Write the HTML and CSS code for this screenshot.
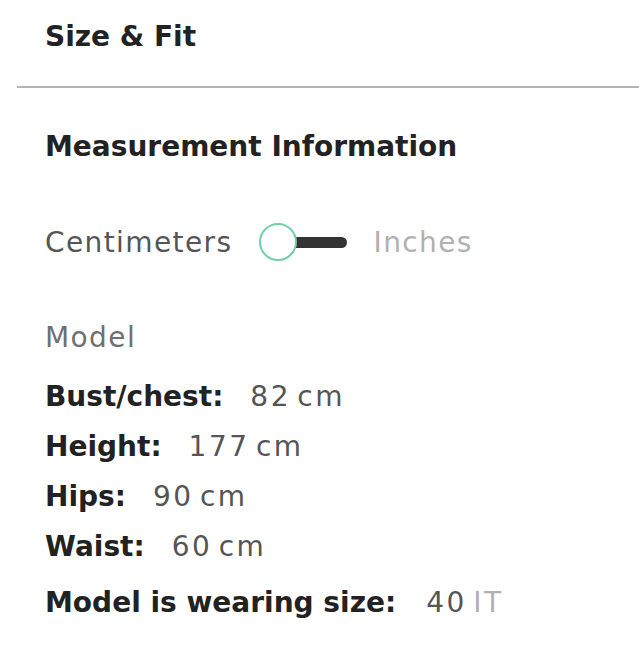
FILE: index.html
```html
<!DOCTYPE html>
<html lang="en">
<head>
    <meta charset="UTF-8" />
    <title>Size &amp; Fit</title>
    <link rel="stylesheet" href="styles.css">
</head>
<body>
    <div class="panel">
        <h1 class="panel-title">Size &amp; Fit</h1>
        <hr class="divider" />

        <section class="measurements">
            <h2 class="section-title">Measurement Information</h2>

            <div class="unit-toggle">
                <span class="unit active">Centimeters</span>
                <span class="switch"><span class="knob"></span></span>
                <span class="unit">Inches</span>
            </div>

            <div class="model-label">Model</div>
            <ul class="model-list">
                <li><span class="label">Bust/chest:</span><span class="value">82 cm</span></li>
                <li><span class="label">Height:</span><span class="value">177 cm</span></li>
                <li><span class="label">Hips:</span><span class="value">90 cm</span></li>
                <li><span class="label">Waist:</span><span class="value">60 cm</span></li>
                <li class="wearing"><span class="label">Model is wearing size:</span><span class="value">40 <span class="size-system">IT</span></span></li>
            </ul>
        </section>
    </div>
</body>
</html>
```
FILE: styles.css
```css
body {
    margin: 0;
    background: #fff;
    font-family: 'DejaVu Sans', sans-serif;
    color: #222;
}
.panel {
    padding-top: 12px;
}
.panel-title {
    margin: 0;
    padding-left: 45px;
    font-size: 28px;
    font-weight: 700;
    line-height: 50px;
    color: #222;
}
.divider {
    margin: 24px 0 0 17px;
    border: none;
    height: 2px;
    background: #b4b4b4;
}
.measurements {
    padding-left: 45px;
}
.section-title {
    margin: 34px 0 0;
    font-size: 28px;
    font-weight: 700;
    line-height: 50px;
    color: #222;
}
.unit-toggle {
    display: flex;
    align-items: center;
    height: 50px;
    margin-top: 45px;
}
.unit {
    font-size: 28px;
    letter-spacing: 1.4px;
    color: #b0b0b0;
}
.unit.active {
    color: #555;
}
.switch {
    position: relative;
    display: inline-block;
    width: 88px;
    height: 38px;
    margin: 0 27px 0 26px;
}
.switch::before {
    content: '';
    position: absolute;
    left: 28px;
    right: 0;
    top: 14px;
    height: 11px;
    border-radius: 6px;
    background: #333;
}
.knob {
    position: absolute;
    left: 0;
    top: 0;
    width: 34px;
    height: 34px;
    border: 2px solid #6fd1a6;
    border-radius: 50%;
    background: #fff;
}
.model-label {
    margin-top: 46px;
    font-size: 28px;
    line-height: 50px;
    letter-spacing: 1.4px;
    color: #707070;
}
.model-list {
    list-style: none;
    margin: 9px 0 0;
    padding: 0;
}
.model-list li {
    font-size: 28px;
    line-height: 50px;
}
.model-list li.wearing {
    margin-top: 6px;
}
.label {
    font-weight: 700;
    color: #222;
}
.value {
    margin-left: 27px;
    letter-spacing: 2.5px;
    word-spacing: -5px;
    color: #555;
}
.wearing .value {
    margin-left: 30px;
}
.size-system {
    color: #b0b0b0;
}
```
